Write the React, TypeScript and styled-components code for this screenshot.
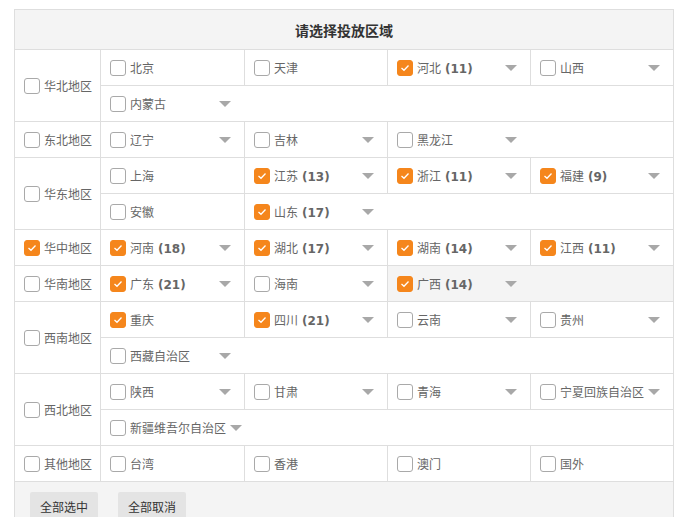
import styled, { createGlobalStyle } from 'styled-components';

type Item = { name: string; count?: number; checked?: boolean; drop?: boolean; hover?: boolean };
type Region = { name: string; checked?: boolean; rows: Item[][]; shadeTail?: boolean };

const REGIONS: Region[] = [
  {
    name: '华北地区',
    rows: [
      [{ name: '北京' }, { name: '天津' }, { name: '河北', count: 11, checked: true, drop: true }, { name: '山西', drop: true }],
      [{ name: '内蒙古', drop: true }],
    ],
  },
  {
    name: '东北地区',
    rows: [[{ name: '辽宁', drop: true }, { name: '吉林', drop: true }, { name: '黑龙江', drop: true }]],
  },
  {
    name: '华东地区',
    rows: [
      [
        { name: '上海' },
        { name: '江苏', count: 13, checked: true, drop: true },
        { name: '浙江', count: 11, checked: true, drop: true },
        { name: '福建', count: 9, checked: true, drop: true },
      ],
      [{ name: '安徽' }, { name: '山东', count: 17, checked: true, drop: true }],
    ],
  },
  {
    name: '华中地区',
    checked: true,
    rows: [
      [
        { name: '河南', count: 18, checked: true, drop: true },
        { name: '湖北', count: 17, checked: true, drop: true },
        { name: '湖南', count: 14, checked: true, drop: true },
        { name: '江西', count: 11, checked: true, drop: true },
      ],
    ],
  },
  {
    name: '华南地区',
    shadeTail: true,
    rows: [
      [
        { name: '广东', count: 21, checked: true, drop: true },
        { name: '海南', drop: true },
        { name: '广西', count: 14, checked: true, drop: true, hover: true },
      ],
    ],
  },
  {
    name: '西南地区',
    rows: [
      [
        { name: '重庆', checked: true },
        { name: '四川', count: 21, checked: true, drop: true },
        { name: '云南', drop: true },
        { name: '贵州', drop: true },
      ],
      [{ name: '西藏自治区', drop: true }],
    ],
  },
  {
    name: '西北地区',
    rows: [
      [{ name: '陕西', drop: true }, { name: '甘肃', drop: true }, { name: '青海', drop: true }, { name: '宁夏回族自治区', drop: true }],
      [{ name: '新疆维吾尔自治区', drop: true }],
    ],
  },
  {
    name: '其他地区',
    rows: [[{ name: '台湾' }, { name: '香港' }, { name: '澳门' }, { name: '国外' }]],
  },
];

const GlobalStyle = createGlobalStyle`
  body {
    margin: 0;
    background: #fff;
    font-family: "DejaVu Sans", "Noto Sans CJK SC", sans-serif;
  }
`;

const Page = styled.div`
  padding: 9px 11px 0 14px;
`;

const Panel = styled.div`
  width: 660px;
  box-sizing: border-box;
  border: 1px solid #dedede;
  border-bottom: none;
  overflow: hidden;
`;

const Title = styled.div`
  height: 39px;
  background: #f4f4f4;
  display: flex;
  align-items: center;
  justify-content: center;
  font-family: "Noto Sans CJK SC", sans-serif;
  font-size: 14px;
  font-weight: bold;
  color: #333;
`;

const RegionRow = styled.div`
  display: flex;
  border-top: 1px solid #dedede;
`;

const RegionLabel = styled.label`
  width: 86px;
  flex-shrink: 0;
  box-sizing: border-box;
  border-right: 1px solid #dedede;
  display: flex;
  align-items: center;
  gap: 4px;
  padding-left: 9px;
  font-size: 12px;
  color: #666;
`;

const SubRows = styled.div`
  flex: 1;
  display: flex;
  flex-direction: column;
`;

const SubRow = styled.div`
  display: flex;
  height: 35px;
  & + & {
    border-top: 1px solid #dedede;
  }
`;

const Cell = styled.div<{ $first: boolean; $hover?: boolean }>`
  min-width: 143px;
  box-sizing: border-box;
  display: flex;
  align-items: center;
  gap: 4px;
  padding: 0 13px 0 9px;
  border-left: ${({ $first }) => ($first ? 'none' : '1px solid #dedede')};
  background: ${({ $hover }) => ($hover ? '#f4f4f4' : 'transparent')};
  font-size: 12px;
  color: #666;
  white-space: nowrap;
`;

const Filler = styled.div<{ $shade?: boolean }>`
  flex: 1;
  background: ${({ $shade }) => ($shade ? '#f4f4f4' : 'transparent')};
`;

const Name = styled.span`
  font-family: "Noto Sans CJK SC", sans-serif;
`;

const Count = styled.b`
  font-family: "DejaVu Sans", sans-serif;
  font-weight: bold;
  color: #666;
  margin-left: 4px;
`;

const Box = styled.span<{ $on?: boolean }>`
  width: 16px;
  height: 16px;
  flex-shrink: 0;
  box-sizing: border-box;
  border-radius: 3px;
  border: 1px solid ${({ $on }) => ($on ? '#f5861c' : '#a9a9a9')};
  background: ${({ $on }) => ($on ? '#f5861c' : '#fff')};
  display: flex;
  align-items: center;
  justify-content: center;
`;

const Arrow = styled.span`
  margin-left: auto;
  width: 0;
  height: 0;
  border-left: 6px solid transparent;
  border-right: 6px solid transparent;
  border-top: 6px solid #a8a8a8;
  flex-shrink: 0;
`;

const Footer = styled.div`
  border-top: 1px solid #dedede;
  background: #f4f4f4;
  height: 40px;
  display: flex;
  align-items: flex-start;
  gap: 20px;
  padding: 10px 0 0 15px;
`;

const Button = styled.button`
  height: 28px;
  padding: 0 10px;
  border: none;
  border-radius: 2px;
  background: #e4e4e4;
  font-family: "Noto Sans CJK SC", sans-serif;
  font-size: 12px;
  color: #333;
`;

function Check({ on }: { on?: boolean }) {
  return (
    <Box $on={on}>
      {on && (
        <svg width="10" height="8" viewBox="0 0 10 8">
          <path d="M1.5 4 L4 6.3 L8.5 1.5" fill="none" stroke="#fff" strokeWidth="1.3" />
        </svg>
      )}
    </Box>
  );
}

export default function App() {
  return (
    <Page>
      <GlobalStyle />
      <Panel>
        <Title>请选择投放区域</Title>
        {REGIONS.map((r) => (
          <RegionRow key={r.name}>
            <RegionLabel>
              <Check on={r.checked} />
              <Name>{r.name}</Name>
            </RegionLabel>
            <SubRows>
              {r.rows.map((row, i) => (
                <SubRow key={i}>
                  {row.map((it, j) => (
                    <Cell key={it.name} $first={j === 0} $hover={it.hover}>
                      <Check on={it.checked} />
                      <span>
                        <Name>{it.name}</Name>
                        {it.count !== undefined && <Count>({it.count})</Count>}
                      </span>
                      {it.drop && <Arrow />}
                    </Cell>
                  ))}
                  <Filler $shade={r.shadeTail} />
                </SubRow>
              ))}
            </SubRows>
          </RegionRow>
        ))}
        <Footer>
          <Button>全部选中</Button>
          <Button>全部取消</Button>
        </Footer>
      </Panel>
    </Page>
  );
}
